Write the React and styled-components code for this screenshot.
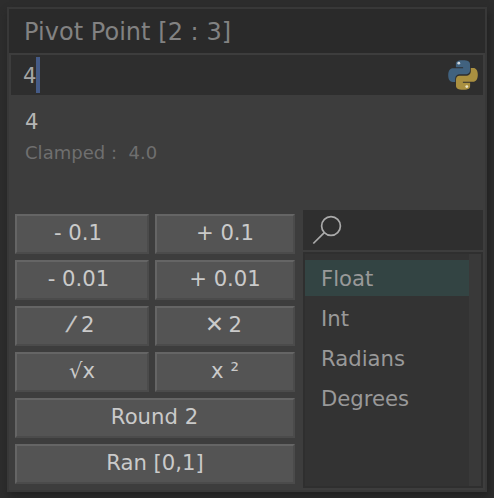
import React from "react";
import styled, { createGlobalStyle } from "styled-components";

const GlobalStyle = createGlobalStyle`
  *, *::before, *::after { box-sizing: border-box; }
  body { margin: 0; background: #2c2c2c; overflow: hidden; }
`;

const Backdrop = styled.div`
  width: 494px;
  height: 498px;
  padding: 7px;
  background: #2d2d2d;
  font-family: "DejaVu Sans", sans-serif;
  font-size: 21.2px;
`;

const Panel = styled.main`
  width: 480px;
  height: 485px;
  border: 2px solid #383838;
  background: #3d3d3d;
  box-shadow: 2px 5px 8px #202020;
`;

const TitleBar = styled.header`
  height: 44px;
  padding: 1px 0 0 15px;
  background: #2a2a2a;
  color: #828282;
  font-size: 24px;
  letter-spacing: 0.04px;
  line-height: 45px;
  white-space: pre;
`;

const ValueField = styled.div`
  display: flex;
  align-items: center;
  height: 40px;
  margin: 2px 2px 0;
  padding: 0 4px 0 12px;
  background: #2e2e2e;
  color: #a5a5a5;
`;

const Value = styled.span`
  width: 13px;
  padding-top: 2px;
  line-height: 26px;
`;

const Caret = styled.span`
  width: 4px;
  height: 36px;
  background: #455b87;
`;

const LanguageIcon = styled.svg`
  width: 32px;
  height: 32px;
  margin-left: auto;
`;

const Result = styled.section`
  height: 115px;
  padding: 13px 16px 0;
  color: #b5b5b5;
  line-height: 27px;
`;

const Clamped = styled.div`
  margin-top: 5px;
  color: #6f6f6f;
  font-size: 18px;
  letter-spacing: 0.03px;
  line-height: 26px;
  white-space: pre;
`;

const Body = styled.section`
  display: flex;
  gap: 8px;
  padding: 0 2px 0 6px;
`;

const Keypad = styled.div`
  display: grid;
  grid-template-columns: 134px 140px;
  grid-auto-rows: 40px;
  gap: 6px;
  padding-top: 4px;
`;

const Key = styled.button`
  grid-column: ${(p) => (p.$wide ? "1 / -1" : "auto")};
  border: 2px solid;
  border-color: #656565 #4b4b4b #4b4b4b #656565;
  padding: 0 ${(p) => p.$inset ?? 0}px 2px 0;
  background: #545454;
  color: #cacaca;
  font: inherit;
  line-height: 34px;
  white-space: pre;
  word-spacing: ${(p) => p.$space || 0}px;
`;

const Operator = styled.span`
  font-size: ${(p) => p.$size || 21.2}px;
  line-height: 1;
  -webkit-text-stroke: ${(p) => p.$stroke || 0}px currentColor;
`;

const Picker = styled.div`
  display: flex;
  flex-direction: column;
  gap: 2px;
  width: 180px;
`;

const Search = styled.div`
  height: 40px;
  padding: 4px 8px;
  background: #2f2f2f;
`;

const SearchIcon = styled.svg`
  display: block;
  width: 32px;
  height: 32px;
`;

const ListBox = styled.div`
  display: flex;
  height: 236px;
  border: 2px solid #2f2f2f;
  background: #333333;
`;

const List = styled.ul`
  display: flex;
  flex: 1;
  flex-direction: column;
  gap: 4px;
  margin: 0;
  padding: 6px 0 0;
  list-style: none;
`;

const Item = styled.li`
  height: 36px;
  padding: 1px 0 0 16px;
  background: ${(p) => (p.$selected ? "#334443" : "transparent")};
  color: #999;
  line-height: 36px;
`;

const ScrollTrack = styled.div`
  width: 12px;
  background: #393939;
`;

const keys = [
  { label: "- 0.1", inset: 8 },
  { label: "+ 0.1" },
  { label: "- 0.01", inset: 7 },
  { label: "+ 0.01" },
  { operator: "⁄", label: " 2", stroke: 0.4, inset: 0, space: 1 },
  { operator: "✕", label: " 2", size: 22.6, inset: 3, space: -2.2 },
  { label: "√x", inset: 0 },
  { label: "x ²" },
  { label: "Round 2", wide: true, inset: 1 },
  { label: "Ran [0,1]", wide: true },
];

const types = ["Float", "Int", "Radians", "Degrees"];

const snake =
  "M15.9 1.2C9.6 1.2 8.9 3 8.9 5V8.2H16.1V9.2H5.9C3.2 9.2 1.2 11.6 1.2 16.2S3.2 22.9 5.6 22.9H8.2V19.4C8.2 17 10.3 15.2 12.6 15.2H19.6C21.6 15.2 23 13.6 23 11.6V5C23 2.6 20.8 1.2 15.9 1.2Z";

export default function App() {
  return (
    <>
      <GlobalStyle />
      <Backdrop>
        <Panel>
          <TitleBar>Pivot Point [2 : 3]</TitleBar>
          <ValueField>
            <Value>4</Value>
            <Caret />
            <LanguageIcon viewBox="0 0 32 32">
              <path d={snake} fill="#41627f" />
              <circle cx="11.8" cy="4.2" r="1.4" fill="#d0d8df" />
              <g transform="rotate(180 16 16)">
                <path d={snake} fill="#aa9040" />
                <circle cx="12.2" cy="4.4" r="1.4" fill="#eee6c8" />
              </g>
            </LanguageIcon>
          </ValueField>
          <Result>
            <div>4</div>
            <Clamped>{"Clamped :  4.0"}</Clamped>
          </Result>
          <Body>
            <Keypad>
              {keys.map((k, i) => (
                <Key key={i} $wide={k.wide} $inset={k.inset} $space={k.space}>
                  {k.operator && (
                    <Operator $size={k.size} $stroke={k.stroke}>
                      {k.operator}
                    </Operator>
                  )}
                  {k.label}
                </Key>
              ))}
            </Keypad>
            <Picker>
              <Search>
                <SearchIcon viewBox="0 0 32 32" fill="none" stroke="#aaa" strokeWidth="1.7">
                  <circle cx="20" cy="12" r="9.4" />
                  <path d="M13.3 18.7L2.3 29.5" />
                </SearchIcon>
              </Search>
              <ListBox>
                <List>
                  {types.map((t, i) => (
                    <Item key={t} $selected={i === 0}>
                      {t}
                    </Item>
                  ))}
                </List>
                <ScrollTrack />
              </ListBox>
            </Picker>
          </Body>
        </Panel>
      </Backdrop>
    </>
  );
}
